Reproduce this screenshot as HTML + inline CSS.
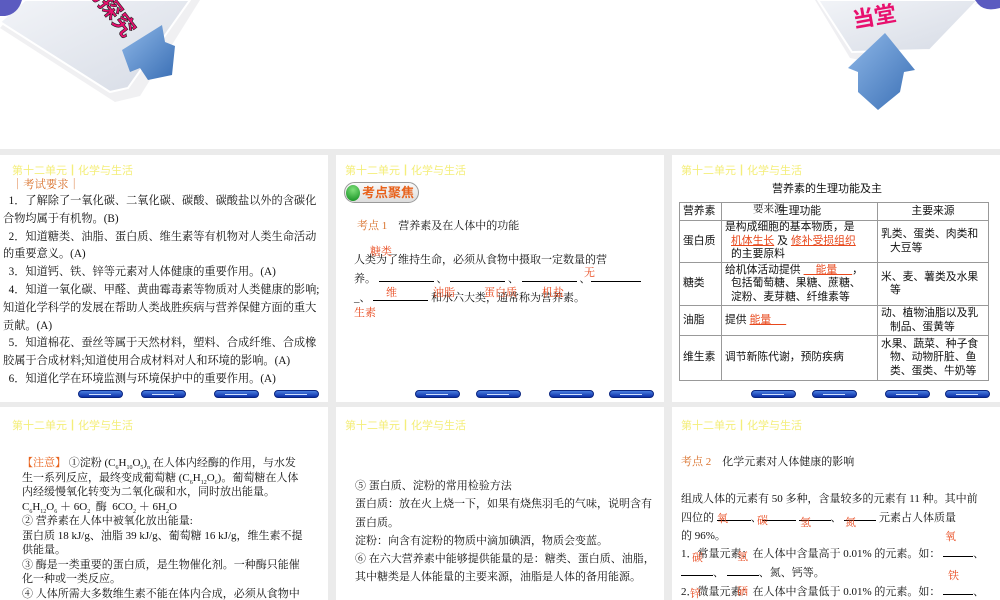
<!DOCTYPE html>
<html><head><meta charset="utf-8">
<style>
*{margin:0;padding:0;box-sizing:border-box}
body{width:1000px;height:600px;overflow:hidden;background:#ebebeb;position:relative;font-family:"Liberation Serif","Noto Serif CJK SC","Noto Sans CJK SC",serif;color:#111}
.top{position:absolute;left:0;top:0;width:1000px;height:149px;background:#fff}
.p{position:absolute;background:#fff;overflow:hidden}
.t{position:absolute;font-size:11px;color:#f4ee7a;font-family:"Liberation Sans","Noto Sans CJK SC",sans-serif;white-space:nowrap}
.a{position:absolute;white-space:nowrap;font-size:11.3px;line-height:17.8px}
.r{color:#e8481c}
.btn{position:absolute;width:45px;height:8px;border-radius:4px;background:linear-gradient(#4a7fe0,#0c2fa8);border:1px solid #0a2580}
.btn:after{content:"";position:absolute;left:10px;top:3px;width:22px;height:1px;background:#cfe0ff}
.ul{display:inline-block;border-bottom:1px solid #000;height:12px;vertical-align:baseline}
sub{font-size:6px;line-height:0}
table{position:absolute;border-collapse:collapse;font-size:10.8px;font-family:"Liberation Sans","Noto Sans CJK SC",sans-serif;line-height:13.5px}
td{border:1px solid #999;padding:0 3px;vertical-align:middle}
</style></head><body>
<div class="top">
<svg width="1000" height="149" style="position:absolute;left:0;top:0">
 <defs><linearGradient id="g1" x1="0" y1="0" x2="1" y2="1"><stop offset="0" stop-color="#f2f4f8"/><stop offset="1" stop-color="#d6dbe5"/></linearGradient>
 <linearGradient id="bl" x1="0" y1="0" x2="1" y2="1"><stop offset="0" stop-color="#8fb8e8"/><stop offset="1" stop-color="#3a6fb5"/></linearGradient></defs>
 <polygon points="0,28 115,102 140,96 200,0 25,0" fill="#e6e6ea" opacity=".6"/>
 <polygon points="25,0 0,22 110,92 128,88 190,0" fill="url(#g1)" stroke="#fff" stroke-width="2"/>
 <path d="M0,0 L22,0 Q18,14 5,16 L0,16Z" fill="#5b5bc0"/>
 <polygon points="122,50 162,25 165,42 175,46 172,75 148,80 140,68 130,72" fill="url(#bl)"/>
 <text x="62" y="8" transform="rotate(52 95 20)" font-size="22" font-weight="bold" fill="#e8106e" stroke="#222" stroke-width=".6" font-family="Noto Sans CJK SC,sans-serif">的探究</text>
 <polygon points="815,0 850,58 860,60 985,0" fill="#e4e4ea" opacity=".6"/>
 <polygon points="818,0 852,52 930,50 978,0" fill="url(#g1)" stroke="#fff" stroke-width="2"/>
 <path d="M975,0 L1000,0 L1000,8 Q985,12 978,4Z" fill="#5b5bc0"/>
 <polygon points="885,33 915,70 904,72 900,92 878,110 858,92 858,72 848,68" fill="url(#bl)"/>
 <text x="852" y="25" transform="rotate(-10 870 15)" font-size="22" font-weight="bold" fill="#e8106e" font-family="Noto Sans CJK SC,sans-serif">当堂</text>
</svg>
</div>

<!-- panel 1 -->
<div class="p" style="left:0;top:155px;width:328px;height:247px">
 <div class="t" style="left:12px;top:7px">第十二单元┃化学与生活</div>
 <div class="a r" style="left:12px;top:22px;color:#d9702a">｜考试要求｜</div>
 <div class="a" style="left:3px;top:38px;width:322px;white-space:normal;font-size:11.2px">
 &nbsp;&nbsp;1．了解除了一氧化碳、二氧化碳、碳酸、碳酸盐以外的含碳化合物均属于有机物。(B)<br>
 &nbsp;&nbsp;2．知道糖类、油脂、蛋白质、维生素等有机物对人类生命活动的重要意义。(A)<br>
 &nbsp;&nbsp;3．知道钙、铁、锌等元素对人体健康的重要作用。(A)<br>
 &nbsp;&nbsp;4．知道一氧化碳、甲醛、黄曲霉毒素等物质对人类健康的影响;知道化学科学的发展在帮助人类战胜疾病与营养保健方面的重大贡献。(A)<br>
 &nbsp;&nbsp;5．知道棉花、蚕丝等属于天然材料，塑料、合成纤维、合成橡胶属于合成材料;知道使用合成材料对人和环境的影响。(A)<br>
 &nbsp;&nbsp;6．知道化学在环境监测与环境保护中的重要作用。(A)</div>
 <div class="btn" style="left:78px;top:235px"></div><div class="btn" style="left:141px;top:235px"></div><div class="btn" style="left:214px;top:235px"></div><div class="btn" style="left:274px;top:235px"></div>
</div>

<!-- panel 2 -->
<div class="p" style="left:336px;top:155px;width:328px;height:247px">
 <div class="t" style="left:9px;top:7px">第十二单元┃化学与生活</div>
 <div style="position:absolute;left:8px;top:27px;width:75px;height:21px;border-radius:11px;background:linear-gradient(#fafafa,#ddd);border:1px solid #999"></div>
 <div style="position:absolute;left:10px;top:30px;width:14px;height:16px;border-radius:50%;background:radial-gradient(circle at 50% 30%,#7fe07a,#0a8a1a)"></div>
 <div class="a" style="left:26px;top:28px;font-size:13px;font-weight:bold;color:#e8621c;font-family:'Noto Sans CJK SC',sans-serif">考点聚焦</div>
 <div class="a" style="left:21px;top:63px;font-size:11px"><span style="color:#d9702a">考点 1</span>&nbsp;&nbsp;&nbsp;&nbsp;营养素及在人体中的功能</div>
 <div class="a" style="left:18px;top:97px;font-size:11px">人类为了维持生命，必须从食物中摄取一定数量的营</div>
 <div class="a r" style="left:34px;top:89px;font-size:11px">糖类</div>
 <div class="a" style="left:18px;top:115px;font-size:11px">养。 <span class="ul" style="width:55px"></span> 、 <span class="ul" style="width:55px"></span> 、 <span class="ul" style="width:55px"></span> 、<span class="ul" style="width:50px"></span></div>
 <div class="a r" style="left:248px;top:110px;font-size:11px">无</div>
 <div class="a" style="left:18px;top:134px;font-size:11px">_、 <span class="ul" style="width:55px"></span> 和水六大类，通常称为营养素。</div>
 <div class="a r" style="left:50px;top:130px;font-size:11px">维</div>
 <div class="a r" style="left:97px;top:130px;font-size:11px">油脂</div>
 <div class="a r" style="left:148px;top:130px;font-size:11px">蛋白质</div>
 <div class="a r" style="left:206px;top:130px;font-size:11px">机盐</div>
 <div class="a r" style="left:18px;top:150px;font-size:11px">生素</div>
 <div class="btn" style="left:79px;top:235px"></div><div class="btn" style="left:140px;top:235px"></div><div class="btn" style="left:213px;top:235px"></div><div class="btn" style="left:273px;top:235px"></div>
</div>

<!-- panel 3 -->
<div class="p" style="left:672px;top:155px;width:328px;height:247px">
 <div class="t" style="left:9px;top:7px">第十二单元┃化学与生活</div>
 <div class="a" style="left:100px;top:26px;font-size:11px;font-family:'Liberation Sans','Noto Sans CJK SC',sans-serif">营养素的生理功能及主</div>
 <table style="left:7px;top:47px;width:310px">
  <tr style="height:18px"><td style="width:42px">营养素</td><td style="width:156px;text-align:center">生理功能</td><td style="text-align:center">主要来源</td></tr>
  <tr style="height:42px"><td>蛋白质</td><td>是构成细胞的基本物质，是<br>&nbsp;&nbsp;<span class="r" style="text-decoration:underline">机体生长</span> 及 <span class="r" style="text-decoration:underline">修补受损组织</span><br>&nbsp;&nbsp;的主要原料</td><td>乳类、蛋类、肉类和<br>&nbsp;&nbsp;&nbsp;大豆等</td></tr>
  <tr style="height:43px"><td>糖类</td><td>给机体活动提供 <span class="r" style="text-decoration:underline">&nbsp;&nbsp;&nbsp;&nbsp;能量&nbsp;&nbsp;&nbsp;&nbsp;&nbsp;</span>，<br>&nbsp;&nbsp;包括葡萄糖、果糖、蔗糖、<br>&nbsp;&nbsp;淀粉、麦芽糖、纤维素等</td><td>米、麦、薯类及水果<br>&nbsp;&nbsp;&nbsp;等</td></tr>
  <tr style="height:30px"><td>油脂</td><td>提供 <span class="r" style="text-decoration:underline">能量&nbsp;&nbsp;&nbsp;&nbsp;&nbsp;</span></td><td>动、植物油脂以及乳<br>&nbsp;&nbsp;&nbsp;制品、蛋黄等</td></tr>
  <tr style="height:45px"><td>维生素</td><td>调节新陈代谢，预防疾病</td><td>水果、蔬菜、种子食<br>&nbsp;&nbsp;&nbsp;物、动物肝脏、鱼<br>&nbsp;&nbsp;&nbsp;类、蛋类、牛奶等</td></tr>
 </table>
 <div class="a" style="left:81px;top:46px;font-size:10.5px">要来源</div>
 <div class="btn" style="left:79px;top:235px"></div><div class="btn" style="left:140px;top:235px"></div><div class="btn" style="left:213px;top:235px"></div><div class="btn" style="left:273px;top:235px"></div>
</div>

<!-- row 2 -->
<div class="p" style="left:0;top:407px;width:328px;height:193px">
 <div class="t" style="left:12px;top:10px">第十二单元┃化学与生活</div>
 <div class="a" style="left:22px;top:49px;font-size:11px;line-height:14.5px;width:282px;white-space:normal">
 <span style="color:#e8621c">【注意】</span> ①淀粉 (C<sub>6</sub>H<sub>10</sub>O<sub>5</sub>)<sub>n</sub> 在人体内经酶的作用，与水发生一系列反应，最终变成葡萄糖 (C<sub>6</sub>H<sub>12</sub>O<sub>6</sub>)。葡萄糖在人体内经缓慢氧化转变为二氧化碳和水，同时放出能量。<br>
 C<sub>6</sub>H<sub>12</sub>O<sub>6</sub> ＋ 6O<sub>2</sub>&nbsp; 酶 &nbsp;6CO<sub>2</sub> ＋ 6H<sub>2</sub>O<br>
 ② 营养素在人体中被氧化放出能量:<br>
 蛋白质 18 kJ/g、油脂 39 kJ/g、葡萄糖 16 kJ/g，维生素不提供能量。<br>
 ③ 酶是一类重要的蛋白质，是生物催化剂。一种酶只能催化一种或一类反应。<br>
 ④ 人体所需大多数维生素不能在体内合成，必须从食物中摄取，缺乏维生素A会引起夜盲症</div>
</div>

<div class="p" style="left:336px;top:407px;width:328px;height:193px">
 <div class="t" style="left:9px;top:10px">第十二单元┃化学与生活</div>
 <div class="a" style="left:19px;top:70px;font-size:11px;line-height:18.3px;width:300px;white-space:normal">
 ⑤ 蛋白质、淀粉的常用检验方法<br>
 蛋白质：放在火上烧一下，如果有烧焦羽毛的气味，说明含有蛋白质。<br>
 淀粉：向含有淀粉的物质中滴加碘酒，物质会变蓝。<br>
 ⑥ 在六大营养素中能够提供能量的是：糖类、蛋白质、油脂，其中糖类是人体能量的主要来源，油脂是人体的备用能源。</div>
</div>

<div class="p" style="left:672px;top:407px;width:328px;height:193px">
 <div class="t" style="left:9px;top:10px">第十二单元┃化学与生活</div>
 <div class="a" style="left:9px;top:47px;font-size:11px"><span style="color:#d9702a">考点 2</span>&nbsp;&nbsp;&nbsp;&nbsp;化学元素对人体健康的影响</div>
 <div class="a" style="left:9px;top:84px;font-size:11px;line-height:17.8px">组成人体的元素有 50 多种，含量较多的元素有 11 种。其中前<br>四位的 <span class="ul" style="width:34px"></span>、<span class="ul" style="width:34px"></span> <span class="ul" style="width:32px"></span>、 <span class="ul" style="width:32px"></span> 元素占人体质量<br>的 96%。<br>1．常量元素：在人体中含量高于 0.01% 的元素。如： <span class="ul" style="width:30px"></span>、<br><span class="ul" style="width:32px"></span>、 <span class="ul" style="width:32px"></span>、氮、钙等。<br>2．微量元素：在人体中含量低于 0.01% 的元素。如： <span class="ul" style="width:30px"></span>、</div>
 <div class="a r" style="left:45px;top:104px;font-size:11px">氧</div>
 <div class="a r" style="left:85px;top:106px;font-size:11px">碳</div>
 <div class="a r" style="left:128px;top:108px;font-size:11px">氢</div>
 <div class="a r" style="left:173px;top:108px;font-size:11px">氮</div>
 <div class="a r" style="left:273px;top:122px;font-size:11px">氧</div>
 <div class="a r" style="left:20px;top:143px;font-size:11px">碳</div>
 <div class="a r" style="left:65px;top:142px;font-size:11px">氢</div>
 <div class="a r" style="left:276px;top:161px;font-size:11px">铁</div>
 <div class="a r" style="left:18px;top:179px;font-size:11px">锌</div>
 <div class="a r" style="left:65px;top:177px;font-size:11px">硒</div>
</div>
</body></html>
